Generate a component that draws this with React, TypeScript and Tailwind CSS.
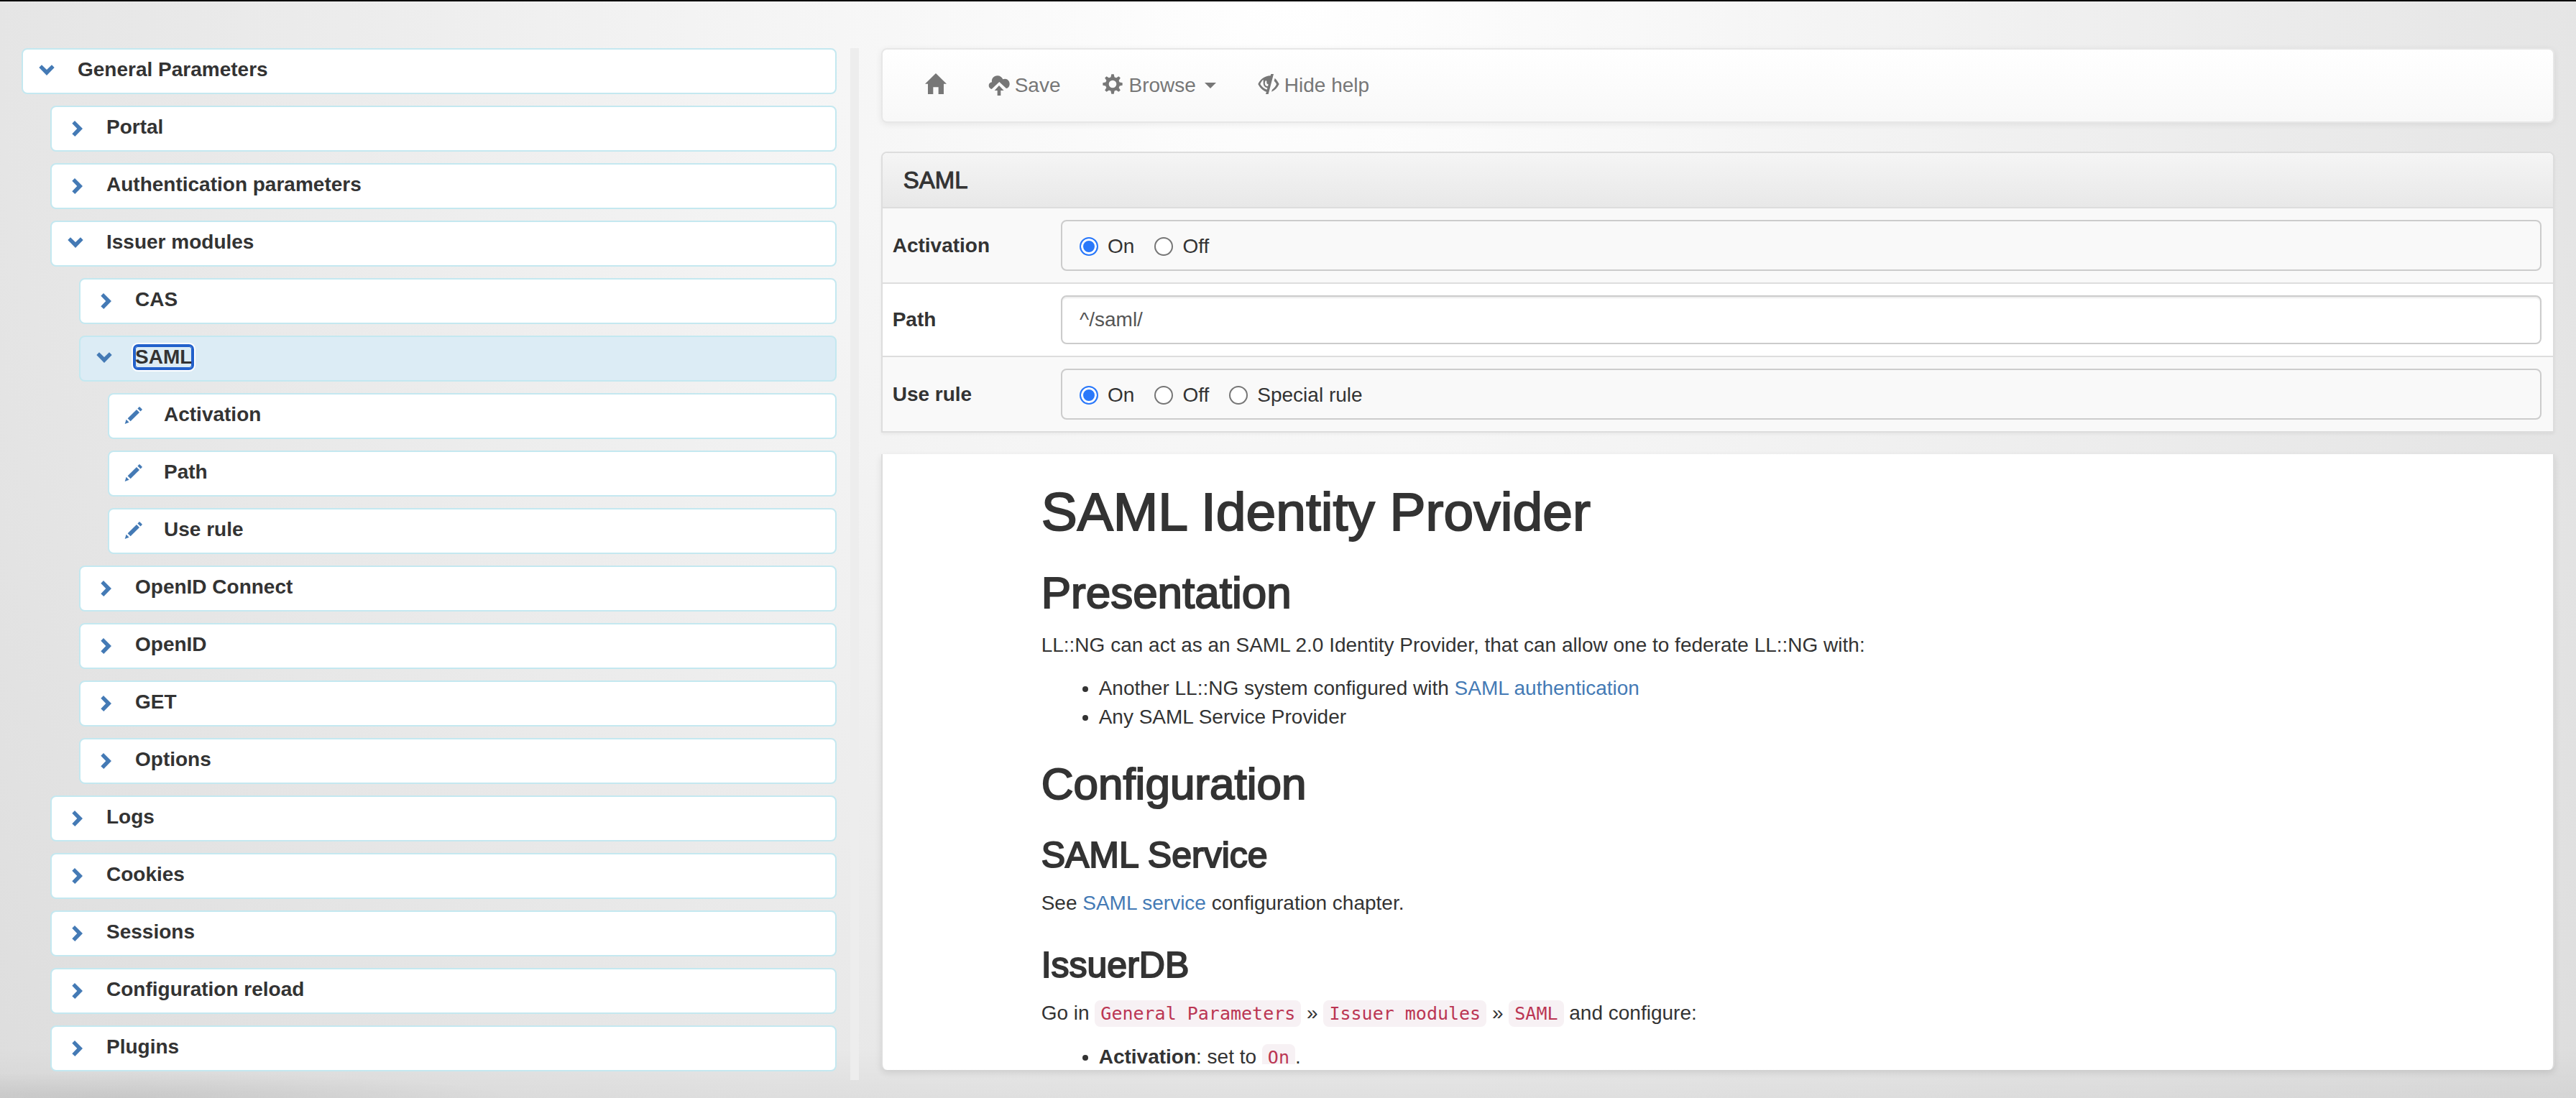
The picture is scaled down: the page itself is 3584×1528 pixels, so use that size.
import React, { useState } from "react";

type Node = {
  label: string;
  open?: boolean;
  leaf?: boolean;
  children?: Node[];
};

const tree: Node[] = [
  {
    label: "General Parameters",
    open: true,
    children: [
      { label: "Portal" },
      { label: "Authentication parameters" },
      {
        label: "Issuer modules",
        open: true,
        children: [
          { label: "CAS" },
          {
            label: "SAML",
            open: true,
            children: [
              { label: "Activation", leaf: true },
              { label: "Path", leaf: true },
              { label: "Use rule", leaf: true },
            ],
          },
          { label: "OpenID Connect" },
          { label: "OpenID" },
          { label: "GET" },
          { label: "Options" },
        ],
      },
      { label: "Logs" },
      { label: "Cookies" },
      { label: "Sessions" },
      { label: "Configuration reload" },
      { label: "Plugins" },
    ],
  },
];

function ChevronRight() {
  return (
    <svg viewBox="0 0 28 28" className="size-7 fill-current" aria-hidden="true">
      <path d="M8.3 8.7 12 5 23 16 12.3 27 8.3 23.3 15.3 16Z" />
    </svg>
  );
}

function ChevronDown() {
  return (
    <svg viewBox="0 0 28 28" className="size-7 fill-current" aria-hidden="true">
      <path d="M2.3 11 6 7.3 13 14 20 7.3 23.7 11 13 22Z" />
    </svg>
  );
}

function Pencil() {
  return (
    <svg viewBox="0 0 28 28" className="size-7 fill-current" aria-hidden="true">
      <path d="M1.7 26.9 3.6 20.8 7.6 24.8Z" />
      <path d="M5.6 19.3 18 6.9 22 10.9 9.6 23.3Z" />
      <path d="M19.4 5.4 21.4 3.4Q22 2.8 22.6 3.4L25.5 6.3Q26.1 6.9 25.5 7.5L23.5 9.5Z" />
    </svg>
  );
}

function HomeIcon() {
  return (
    <svg viewBox="81 63 90 108" className="h-9 w-[30px] fill-current" aria-hidden="true">
      <path d="M126 66 171 110H159V153H137V124H115V153H93V110H81Z" />
    </svg>
  );
}

function CloudUploadIcon() {
  return (
    <svg viewBox="341 63 90 108" className="h-9 w-[30px] fill-current" aria-hidden="true">
      <path d="M355 132C347 130 343 124 343 117C343 109 349 104 356 103C354 87 365 76 379 76C390 76 398 82 402 91C405 90 408 89 411 89C422 89 430 99 430 110C430 120 424 128 416 129L387 102Z" />
      <path d="M386 117 406 138H393V159H379V138H367Z" />
    </svg>
  );
}

function CogIcon() {
  return (
    <svg viewBox="815 63 90 108" className="h-9 w-[30px] fill-current" aria-hidden="true">
      <path
        fillRule="evenodd"
        d="M860 81a30 30 0 1 0 0 60a30 30 0 1 0 0-60ZM860 95a16 16 0 1 1 0 32a16 16 0 1 1 0-32Z"
      />
      {[0, 45, 90, 135, 180, 225, 270, 315].map((a) => (
        <path key={a} transform={`rotate(${a} 860 111)`} d="M852 84 855 70H865L868 84Z" />
      ))}
    </svg>
  );
}

function EyeCloseIcon() {
  return (
    <svg viewBox="329 63 90 108" className="h-9 w-[30px] fill-current" aria-hidden="true">
      <path
        fillRule="evenodd"
        d="M384 69H395L373 153H362L365 143C351 140 339 128 330 111C341 89 358 77 382 76ZM352 92C346 97 342 104 339 111C345 122 355 131 367 134L369 127C359 125 352 117 352 107C352 101 352 96 352 92ZM362 96C358 101 357 111 361 116C364 119 368 121 371 120L373 112C368 111 365 108 366 103C367 100 365 97 362 96Z"
      />
      <path d="M400 86C407 92 413 101 418 111C410 127 400 138 386 143L389 134C396 130 403 121 407 111C405 106 401 102 397 98Z" />
    </svg>
  );
}

function TreeNode({ node }: { node: Node }) {
  const [open, setOpen] = useState(!!node.open);
  const selected = node.label === "SAML";
  return (
    <li>
      <div
        className={
          "mb-4 flex items-start rounded-lg border-2 border-[#c4e8f0] pt-2 pb-3 pl-5 " +
          (selected ? "bg-[#dcecf5]" : "bg-white")
        }
      >
        <button
          type="button"
          aria-label={node.leaf ? "Edit " + node.label : "Toggle " + node.label}
          onClick={() => setOpen(!open)}
          className="flex h-10 w-7 items-center text-[#447ab5]"
        >
          {node.leaf ? <Pencil /> : open ? <ChevronDown /> : <ChevronRight />}
        </button>
        <button type="button" className="ml-7 flex h-10 items-center font-bold">
          <span
            className={
              selected
                ? "rounded-sm leading-[30px] shadow-[inset_0_0_0_1px_#2261cb,0_0_0_3px_#2261cb,0_0_0_5px_#fff]"
                : "leading-10"
            }
          >
            {node.label}
          </span>
        </button>
      </div>
      {open && node.children && (
        <ul className="pl-10">
          {node.children.map((c) => (
            <TreeNode key={c.label} node={c} />
          ))}
        </ul>
      )}
    </li>
  );
}

function RadioGroup({ name, options }: { name: string; options: string[] }) {
  return (
    <div
      role="radiogroup"
      aria-label={name}
      className="flex gap-7 rounded-lg border-2 border-[#ccc] px-6 pt-[15px] pb-3"
    >
      {options.map((o, i) => (
        <label key={o} className="flex items-center gap-[13px]">
          <input
            type="radio"
            name={name}
            defaultChecked={i === 0}
            className="size-[26px] appearance-none rounded-full border-2 border-[#767676] bg-white checked:border-[#2a78fa] checked:bg-[#2a78fa] checked:shadow-[inset_0_0_0_3px_#fff]"
          />
          {o}
        </label>
      ))}
    </div>
  );
}

function Code({ children }: { children: React.ReactNode }) {
  return (
    <code className="rounded-lg bg-[#f7f1f4] px-2 py-1 font-['DejaVu_Sans_Mono',monospace] text-[25px] text-[#bb3553]">
      {children}
    </code>
  );
}

const h2 = "mt-10 mb-5 text-[62px] leading-[66px] [-webkit-text-stroke:2px_#333]";
const h3 = "mt-10 mb-5 text-[50px] leading-[53px] [-webkit-text-stroke:2px_#333]";
const link = "text-[#447ab5]";

export default function App() {
  return (
    <div className="flex h-screen overflow-hidden border-t-2 border-black bg-[radial-gradient(ellipse_560px_36px_at_160px_100%,rgba(0,0,0,0.07),transparent),linear-gradient(to_top,rgba(0,0,0,0.04),transparent_70px),radial-gradient(circle_at_50%_0,#fff,#ddd)] pt-[65px] font-['Liberation_Sans',Arial,sans-serif] text-[28px] leading-10 text-[#333]">
      <aside className="mb-[25px] w-1/3 overflow-hidden border-r-[12px] border-[#ededed] pr-[19px] pl-[30px]">
        <ul>
          {tree.map((n) => (
            <TreeNode key={n.label} node={n} />
          ))}
        </ul>
      </aside>

      <main className="mb-[39px] flex min-w-0 flex-1 flex-col pr-[30px] pl-[31px]">
        <nav className="mb-10 flex gap-[58px] rounded-lg border-2 border-[#e7e7e7] bg-linear-to-b from-white to-[#f8f8f8] py-[30px] pl-[59px] text-[#777] shadow-[0_2px_10px_rgba(0,0,0,0.075)]">
          <button type="button" aria-label="Home" className="flex items-center">
            <HomeIcon />
          </button>
          <button type="button" className="flex items-center gap-[7px]">
            <CloudUploadIcon />
            Save
          </button>
          <button type="button" className="flex items-center gap-[7px]">
            <CogIcon />
            Browse
            <svg viewBox="0 0 16 8" className="ml-[5px] h-2 w-4 fill-current" aria-hidden="true">
              <path d="M0 0H16L8 8Z" />
            </svg>
          </button>
          <button type="button" className="flex items-center gap-[7px]">
            <EyeCloseIcon />
            Hide help
          </button>
        </nav>

        <section className="mb-[30px] rounded-t-lg border-2 border-[#ddd] bg-white shadow-[0_2px_4px_rgba(0,0,0,0.05)]">
          <h2 className="rounded-t-md border-b-2 border-[#ddd] bg-linear-to-b from-[#f5f5f5] to-[#e8e8e8] px-[29px] py-5 text-[33px] leading-[35px] [-webkit-text-stroke:1px_#333]">
            SAML
          </h2>
          <table className="w-full border-collapse text-left">
            <tbody>
              <tr className="bg-[#f9f9f9]">
                <th scope="row" className="w-[10%] px-3.5 font-bold">
                  Activation
                </th>
                <td className="p-4">
                  <RadioGroup name="Activation" options={["On", "Off"]} />
                </td>
              </tr>
              <tr className="border-y-2 border-[#ddd]">
                <th scope="row" className="px-3.5 font-bold">
                  <label htmlFor="path">Path</label>
                </th>
                <td className="p-4">
                  <input
                    id="path"
                    type="text"
                    defaultValue="^/saml/"
                    className="block h-[68px] w-full rounded-lg border-2 border-[#ccc] bg-white px-6 text-[#555] shadow-[inset_0_2px_2px_rgba(0,0,0,0.075)]"
                  />
                </td>
              </tr>
              <tr className="bg-[#f9f9f9]">
                <th scope="row" className="px-3.5 font-bold">
                  Use rule
                </th>
                <td className="p-4">
                  <RadioGroup name="Use rule" options={["On", "Off", "Special rule"]} />
                </td>
              </tr>
            </tbody>
          </table>
        </section>

        <section className="min-h-0 flex-1 rounded-b-lg border-x-2 border-[#ddd] bg-white pb-2 shadow-[0_4px_10px_rgba(0,0,0,0.1)]">
          <div className="h-full overflow-hidden pl-[221px]">
            <h1 className="mt-10 mb-10 text-[75px] leading-[80px] [-webkit-text-stroke:2px_#333]">
              SAML Identity Provider
            </h1>
            <h2 className={h2}>Presentation</h2>
            <p className="mb-5">
              LL::NG can act as an SAML 2.0 Identity Provider, that can allow one to federate LL::NG
              with:
            </p>
            <ul className="mb-5 list-disc pl-20">
              <li>
                Another LL::NG system configured with{" "}
                <a href="#authsaml" className={link}>
                  SAML authentication
                </a>
              </li>
              <li>Any SAML Service Provider</li>
            </ul>
            <h2 className={h2}>Configuration</h2>
            <h3 className={h3}>SAML Service</h3>
            <p className="mb-5">
              See{" "}
              <a href="#samlservice" className={link}>
                SAML service
              </a>{" "}
              configuration chapter.
            </p>
            <h3 className={h3}>IssuerDB</h3>
            <p className="mb-5">
              Go in <Code>General Parameters</Code> » <Code>Issuer modules</Code> » <Code>SAML</Code>{" "}
              and configure:
            </p>
            <ul className="list-disc pl-20">
              <li>
                <strong className="font-bold">Activation</strong>: set to <Code>On</Code>.
              </li>
            </ul>
          </div>
        </section>
      </main>
    </div>
  );
}
